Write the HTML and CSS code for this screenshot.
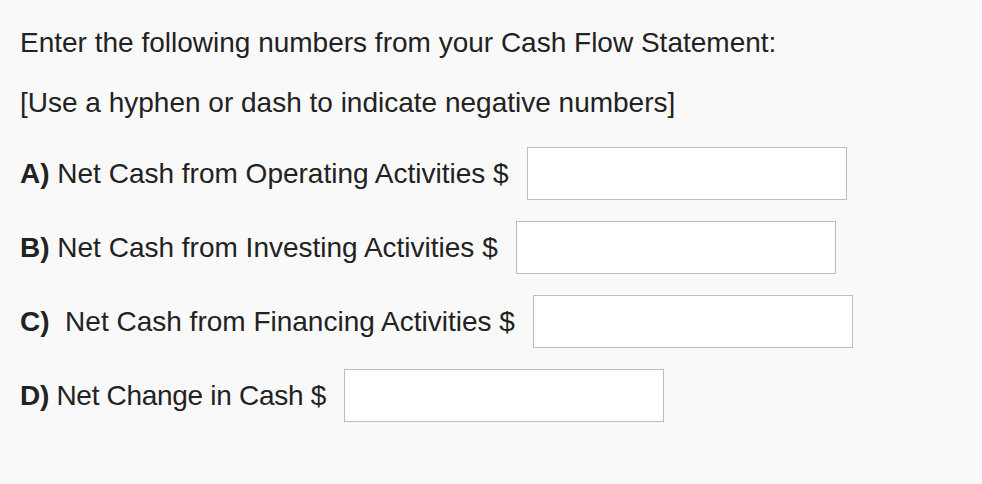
FILE: index.html
```html
<!DOCTYPE html>
<html>
<head>
<meta charset="utf-8">
<link rel="stylesheet" href="styles.css">
</head>
<body>
<div class="page">
  <p class="intro">Enter the following numbers from your Cash Flow Statement:</p>
  <p class="intro note">[Use a hyphen or dash to indicate negative numbers]</p>
  <div class="rows">
    <div class="row"><span class="label"><b>A)</b> Net Cash from Operating Activities $</span><input class="field" type="text"></div>
    <div class="row"><span class="label"><b>B)</b> Net Cash from Investing Activities $</span><input class="field" type="text"></div>
    <div class="row"><span class="label"><b>C)</b>&nbsp; Net Cash from Financing Activities $</span><input class="field" type="text"></div>
    <div class="row"><span class="label tight"><b>D)</b> Net Change in Cash $</span><input class="field" type="text"></div>
  </div>
</div>
</body>
</html>
```
FILE: styles.css
```css
html, body {
  margin: 0;
  padding: 0;
  background: #f9f9f9;
}
.page {
  padding: 27px 0 0 20px;
  font-family: "Liberation Sans", Arial, sans-serif;
  font-size: 28px;
  color: #222;
}
.intro {
  margin: 0 0 28px 0;
  line-height: 32px;
}
.note {
  margin-bottom: 18px;
}
.row {
  display: flex;
  align-items: center;
  padding: 10px 0 11px 0;
}
.label b { font-weight: bold; }
.tight { letter-spacing: -0.3px; }
.field {
  margin-left: 18px;
  width: 320px;
  height: 53px;
  box-sizing: border-box;
  border: 1px solid #bdbdbd;
  background: #fff;
  padding: 0;
  outline: none;
}
```
